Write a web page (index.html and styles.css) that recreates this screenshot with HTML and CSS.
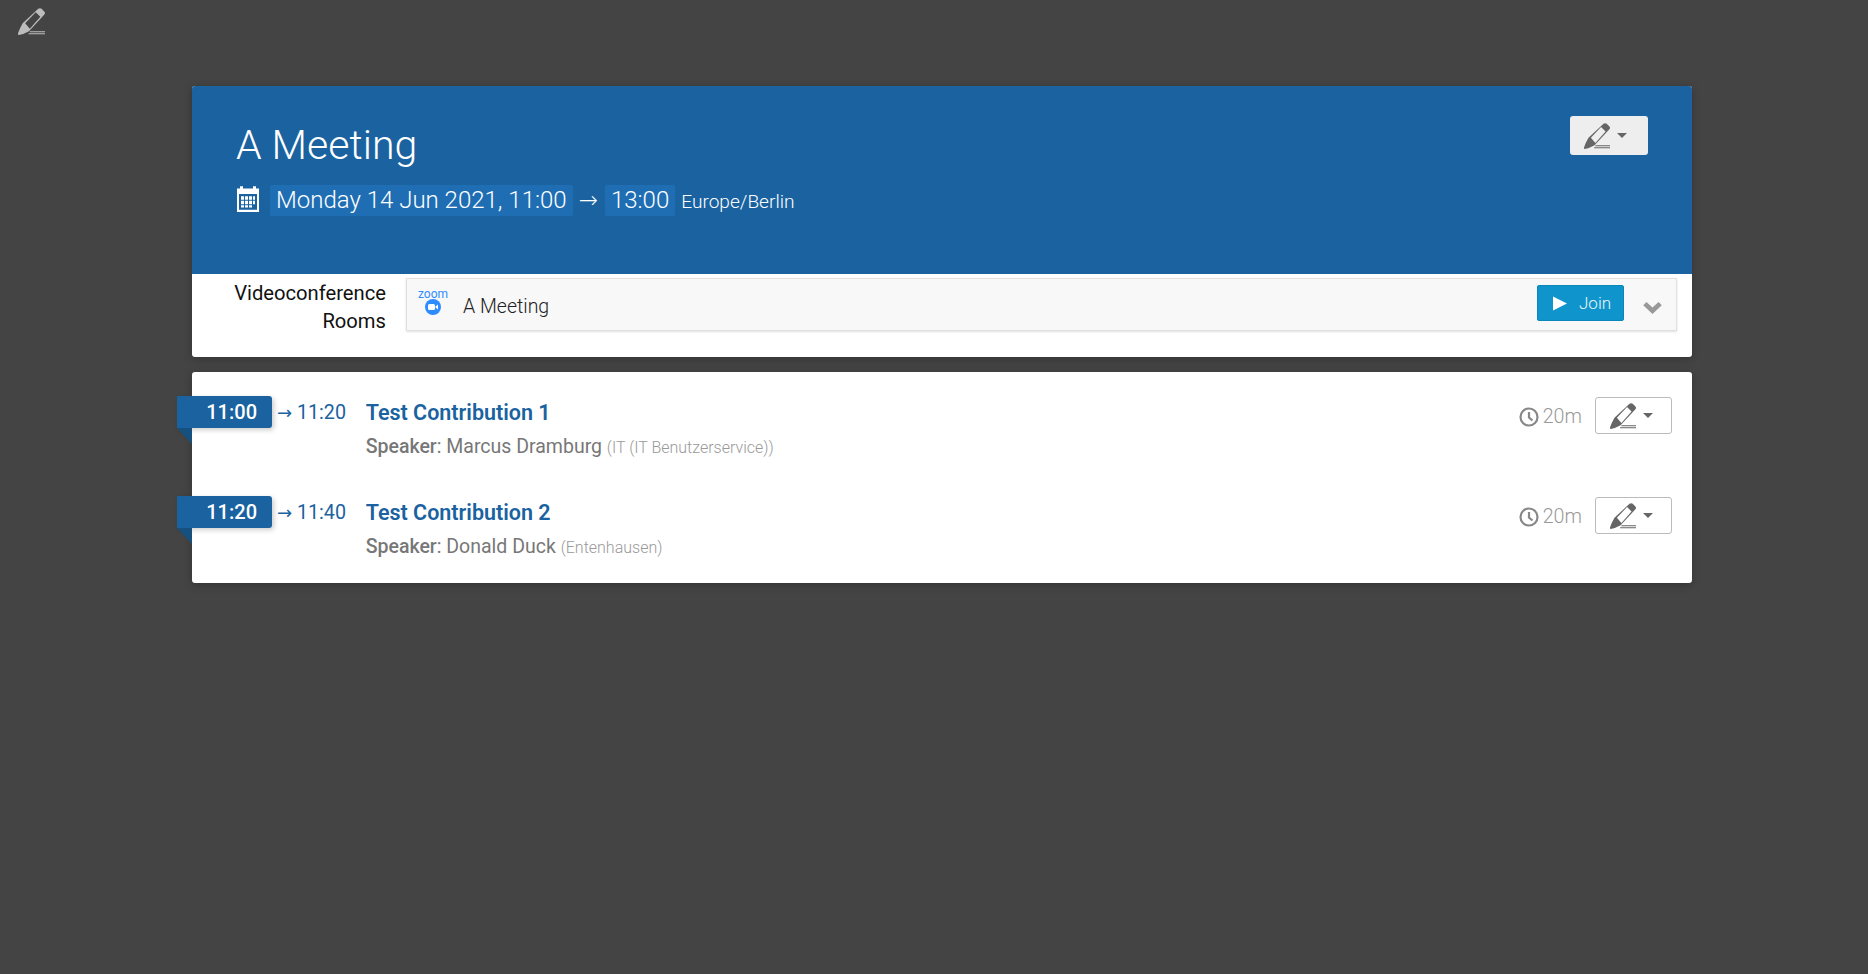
FILE: index.html
```html
<!DOCTYPE html>
<html lang="en">
<head>
  <meta charset="UTF-8">
  <meta name="viewport" content="width=device-width, initial-scale=1.0">
  <title>A Meeting</title>
  <link rel="stylesheet" href="styles.css">
</head>
<body>
  <svg width="0" height="0" class="defs">
    <symbol id="icon-edit" viewBox="0 0 32 32">
      <path d="M24 1q2-1.500 4 0l3 3q2 2 0 4L13 27.500Q7 31 1 32q-1.500 0-1-2Q2 24 5.500 18zM21 5L8.500 18 14 24.500 26.500 10.500z" fill-rule="evenodd"/>
      <path d="M14 27.500h18v1.200H14zM12.500 29.800H32V31H12.500z"/>
    </symbol>
  </svg>

  <div class="topbar">
    <svg class="top-edit"><use href="#icon-edit"/></svg>
  </div>

  <main class="page">
    <section class="card event">
      <header class="event-head">
        <div>
          <h1>A Meeting</h1>
          <div class="event-date">
            <svg class="cal" viewBox="0 0 24 24" preserveAspectRatio="none">
              <path d="M1 3h3V1h3v2h10V1h3v2h3v21H1zM3 8v14h18V8z" fill-rule="evenodd"/>
              <path d="M5 10h3v3H5zM9 10h3v3H9zM13 10h3v3h-3zM17 10h2v3h-2zM5 14h3v3H5zM9 14h3v3H9zM13 14h3v3h-3zM17 14h2v3h-2zM5 18h3v2H5zM9 18h3v2H9zM13 18h3v2h-3z"/>
            </svg>
            <span class="stamp">Monday 14 Jun 2021, 11:00</span>
            <span class="arrow">→</span>
            <span class="stamp">13:00</span>
            <span class="tz">Europe/Berlin</span>
          </div>
        </div>
        <button class="edit-btn head-edit">
          <svg class="edit-ico"><use href="#icon-edit"/></svg>
          <span class="caret"></span>
        </button>
      </header>
      <div class="vc-row">
        <div class="vc-label">Videoconference<br>Rooms</div>
        <div class="vc-box">
          <div class="zoom-logo">
            <span class="zoom-word">zoom</span>
            <svg class="zoom-cam" viewBox="0 0 16 16">
              <circle cx="8" cy="8" r="8" fill="#2d8cff"/>
              <rect x="3" y="5" width="7" height="6" rx="1.500" fill="#fff"/>
              <path d="M10.500 7.500l2.500-2v5l-2.500-2z" fill="#fff"/>
            </svg>
          </div>
          <span class="vc-name">A Meeting</span>
          <button class="join">
            <svg class="play" viewBox="0 0 12 12"><path d="M0 0l12 6-12 6z"/></svg>
            Join
          </button>
          <svg class="chevron" viewBox="0 0 20 14"><path d="M0 4.500l3.500-3.500L10 7l6.500-6 3.500 3.500L10 14z"/></svg>
        </div>
      </div>
    </section>

    <section class="card contribs">
      <div class="contrib">
        <span class="start">11:00</span>
        <span class="end"><span class="end-arrow">→</span> 11:20</span>
        <div class="info">
          <a class="title" href="#">Test Contribution 1</a>
          <div class="speaker"><b>Speaker</b>: Marcus Dramburg <small>(IT (IT Benutzerservice))</small></div>
        </div>
        <span class="duration">
          <svg class="clock" viewBox="0 0 20 20"><circle cx="10" cy="10" r="8.500"/><path d="M10 5v5.500l3.500 3"/></svg>20m
        </span>
        <button class="edit-btn">
          <svg class="edit-ico"><use href="#icon-edit"/></svg>
          <span class="caret"></span>
        </button>
      </div>
      <div class="contrib">
        <span class="start">11:20</span>
        <span class="end"><span class="end-arrow">→</span> 11:40</span>
        <div class="info">
          <a class="title" href="#">Test Contribution 2</a>
          <div class="speaker"><b>Speaker</b>: Donald Duck <small>(Entenhausen)</small></div>
        </div>
        <span class="duration">
          <svg class="clock" viewBox="0 0 20 20"><circle cx="10" cy="10" r="8.500"/><path d="M10 5v5.500l3.500 3"/></svg>20m
        </span>
        <button class="edit-btn">
          <svg class="edit-ico"><use href="#icon-edit"/></svg>
          <span class="caret"></span>
        </button>
      </div>
    </section>
  </main>
</body>
</html>
```

FILE: styles.css
```css
body {
  margin: 0;
  height: 974px;
  overflow: hidden;
  background: #444;
  font-family: Roboto, "Liberation Sans", sans-serif;
  font-weight: 300;
}
.defs {
  display: block;
  height: 0;
}
.topbar {
  height: 86px;
  padding: 8px 0 0 18px;
  box-sizing: border-box;
}
.top-edit {
  display: block;
  width: 27px;
  height: 27px;
  fill: #bdbdbd;
}
.page {
  margin: 0 176px 0 192px;
}
.card {
  background: #fff;
  border-radius: 3px;
  box-shadow: 0 2px 8px rgba(0, 0, 0, 0.25);
}
.event {
  height: 271px;
}
.event-head {
  height: 188px;
  box-sizing: border-box;
  padding: 31px 44px 0;
  display: flex;
  justify-content: space-between;
  align-items: flex-start;
  background: #1a62a0;
  color: #fff;
  border-radius: 3px 3px 0 0;
}
h1 {
  margin: 0;
  font-size: 41px;
  line-height: 56px;
  font-weight: 300;
}
.event-date {
  display: flex;
  align-items: center;
  margin-top: 12px;
  font-size: 24px;
}
.cal {
  width: 24px;
  height: 27px;
  fill: #fff;
  margin: 0 10px 4px 0;
}
.stamp {
  background: #1f6eb4;
  border-radius: 2px;
  padding: 0 6px;
  line-height: 31px;
}
.arrow {
  margin: 0 7px 0 6px;
  font-family: "DejaVu Sans", sans-serif;
  font-size: 23px;
  line-height: 31px;
}
.tz {
  margin-left: 6px;
  font-size: 19.100px;
  font-weight: 300;
  position: relative;
  top: 1px;
}
.edit-btn {
  width: 77px;
  height: 37px;
  padding: 0 0 0 14px;
  display: flex;
  align-items: center;
  gap: 7px;
  background: #fff;
  border: 1px solid #bbb;
  border-radius: 3px;
}
.head-edit {
  width: 78px;
  height: 39px;
  margin-top: -1px;
  background: #eee;
  border: none;
}
.edit-ico {
  width: 26px;
  height: 26px;
  fill: #666;
}
.caret {
  width: 0;
  height: 0;
  border-left: 5px solid transparent;
  border-right: 5px solid transparent;
  border-top: 5px solid #666;
}
.vc-row {
  display: flex;
  padding-top: 4px;
}
.vc-label {
  width: 194px;
  padding-top: 1px;
  text-align: right;
  font-size: 20.200px;
  font-weight: 400;
  line-height: 28px;
  color: #111;
}
.vc-box {
  width: 1271px;
  height: 53px;
  margin-left: 20px;
  box-sizing: border-box;
  display: flex;
  align-items: center;
  background: #f8f8f8;
  border: 1px solid #e0e0e0;
  box-shadow: 0 1px 2px rgba(0, 0, 0, 0.12);
  padding-left: 11px;
}
.zoom-logo {
  width: 30px;
  margin-bottom: 5px;
  display: flex;
  flex-direction: column;
  align-items: center;
}
.zoom-word {
  font-size: 12px;
  line-height: 10px;
  color: #2d8cff;
  font-weight: 400;
}
.zoom-cam {
  width: 16px;
  height: 16px;
}
.vc-name {
  margin: 3px 0 0 15px;
  font-size: 19.500px;
  font-weight: 300;
  color: #222;
  flex: 1;
}
.join {
  width: 87px;
  height: 36px;
  margin-bottom: 3px;
  display: flex;
  align-items: center;
  padding: 0 0 0 15px;
  gap: 12px;
  background: #0f95cc;
  border: 1px solid #0b86b8;
  border-radius: 2px;
  color: #e8f6fb;
  font-family: inherit;
  font-size: 17px;
  font-weight: 300;
}
.play {
  width: 14px;
  height: 15px;
  fill: #fff;
}
.chevron {
  width: 19px;
  height: 13px;
  fill: #999;
  margin: 5px 14px 0 19px;
}
.contribs {
  margin-top: 15px;
  height: 211px;
  padding-top: 24px;
  box-sizing: border-box;
}
.contrib {
  height: 100px;
  display: flex;
  align-items: flex-start;
  position: relative;
}
.start {
  position: relative;
  margin-left: -15px;
  width: 95px;
  height: 32px;
  box-sizing: border-box;
  padding: 0 15px 0 0;
  text-align: right;
  background: #1a62a0;
  color: #fff;
  font-size: 20px;
  font-weight: 500;
  line-height: 33px;
  border-radius: 0 3px 3px 0;
  box-shadow: 2px 2px 5px rgba(0, 0, 0, 0.2);
}
.start::after {
  content: "";
  position: absolute;
  left: 0;
  top: 100%;
  border-top: 16px solid #15507f;
  border-left: 15px solid transparent;
}
.end {
  width: 88.700px;
  margin-left: 5px;
  color: #1a62a0;
  font-size: 19.700px;
  font-weight: 400;
  line-height: 33px;
  white-space: nowrap;
}
.end-arrow {
  font-family: "DejaVu Sans", sans-serif;
  font-size: 18px;
}
.info {
  flex: 1;
}
.title {
  display: block;
  color: #1a62a0;
  font-size: 21.500px;
  font-weight: 600;
  line-height: 33px;
  text-decoration: none;
}
.speaker {
  margin-top: 3px;
  color: #777;
  font-size: 19.500px;
  font-weight: 400;
  line-height: 30px;
}
.speaker b {
  font-weight: 500;
}
.speaker small {
  font-size: 16px;
  font-weight: 300;
  color: #999;
}
.duration {
  display: flex;
  align-items: center;
  gap: 4px;
  margin: 5px 13px 0 0;
  color: #999;
  font-size: 19.700px;
  line-height: 32px;
  font-weight: 300;
}
.clock {
  width: 20px;
  height: 20px;
  fill: none;
  stroke: #888;
  stroke-width: 2.200;
}
.contrib .edit-btn {
  margin-right: 20px;
  margin-top: 1px;
}
```
